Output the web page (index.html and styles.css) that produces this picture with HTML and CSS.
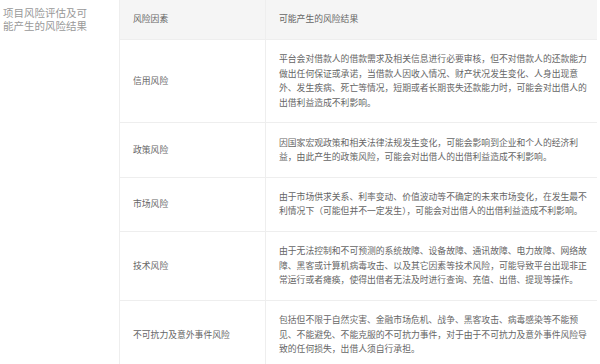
FILE: index.html
```html
<!DOCTYPE html>
<html lang="zh-CN">
<head>
<meta charset="utf-8">
<link rel="stylesheet" href="styles.css">
</head>
<body>
<div class="section">
  <div class="label">项目风险评估及可能产生的风险结果</div>
  <table class="risk">
    <thead>
      <tr><th class="c1">风险因素</th><th class="c2">可能产生的风险结果</th></tr>
    </thead>
    <tbody>
      <tr><td class="c1">信用风险</td><td class="c2">平台会对借款人的借款需求及相关信息进行必要审核，但不对借款人的还款能力做出任何保证或承诺，当借款人因收入情况、财产状况发生变化、人身出现意外、发生疾病、死亡等情况，短期或者长期丧失还款能力时，可能会对出借人的出借利益造成不利影响。</td></tr>
      <tr><td class="c1">政策风险</td><td class="c2">因国家宏观政策和相关法律法规发生变化，可能会影响到企业和个人的经济利益，由此产生的政策风险，可能会对出借人的出借利益造成不利影响。</td></tr>
      <tr><td class="c1">市场风险</td><td class="c2">由于市场供求关系、利率变动、价值波动等不确定的未来市场变化，在发生最不利情况下（可能但并不一定发生），可能会对出借人的出借利益造成不利影响。</td></tr>
      <tr><td class="c1">技术风险</td><td class="c2">由于无法控制和不可预测的系统故障、设备故障、通讯故障、电力故障、网络故障、黑客或计算机病毒攻击、以及其它因素等技术风险，可能导致平台出现非正常运行或者瘫痪，使得出借者无法及时进行查询、充值、出借、提现等操作。</td></tr>
      <tr><td class="c1">不可抗力及意外事件风险</td><td class="c2">包括但不限于自然灾害、金融市场危机、战争、黑客攻击、病毒感染等不能预见、不能避免、不能克服的不可抗力事件，对于由于不可抗力及意外事件风险导致的任何损失，出借人须自行承担。</td></tr>
    </tbody>
  </table>
</div>
</body>
</html>
```

FILE: styles.css
```css
html, body {
  margin: 0;
  padding: 0;
  background: #fff;
}
body {
  font-family: "Noto Sans CJK SC", "Noto Sans", sans-serif;
  width: 600px;
  height: 364px;
  overflow: hidden;
}
.section {
  display: flex;
  align-items: flex-start;
}
.label {
  flex: 0 0 119px;
  box-sizing: border-box;
  padding: 6px 28px 0 3px;
  font-size: 10.5px;
  line-height: 13.4px;
  color: #999;
}
.risk {
  flex: 0 0 478px;
  width: 478px;
  border-collapse: collapse;
  table-layout: fixed;
  border-left: 1px solid #eee;
  font-size: 8.8px;
  line-height: 14.4px;
  color: #666;
}
.risk th,
.risk td {
  padding: 12.3px 8px 12.3px 13px;
  text-align: left;
  font-weight: normal;
  vertical-align: middle;
  border-bottom: 1px solid #eee;
}
.risk thead th {
  background: #f5f5f5;
  color: #666;
}
.risk .c1 {
  width: 124px;
  border-right: 1px solid #eee;
}
```
